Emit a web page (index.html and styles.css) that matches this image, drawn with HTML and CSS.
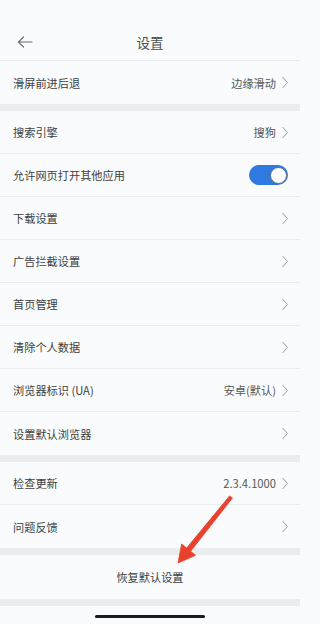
FILE: index.html
```html
<!DOCTYPE html>
<html lang="zh">
<head>
<meta charset="utf-8">
<link rel="stylesheet" href="styles.css">
</head>
<body>
<div class="page">
  <header class="header">
    <svg class="back" width="16" height="12" viewBox="0 0 16 12"><path d="M15 6H1.5M6.5 1L1.5 6l5 5" fill="none" stroke="#6b6f72" stroke-width="1.2" stroke-linecap="round" stroke-linejoin="round"/></svg>
    <div class="title">设置</div>
  </header>

  <div class="group">
    <div class="row"><span class="label">滑屏前进后退</span><span class="value">边缘滑动</span><svg class="chev" width="8" height="13" viewBox="0 0 8 13"><path d="M1.5 1l5 5.5-5 5.5" fill="none" stroke="#9a9ea1" stroke-width="1"/></svg></div>
  </div>
  <div class="gap"></div>
  <div class="group">
    <div class="row"><span class="label">搜索引擎</span><span class="value">搜狗</span><svg class="chev" width="8" height="13" viewBox="0 0 8 13"><path d="M1.5 1l5 5.5-5 5.5" fill="none" stroke="#9a9ea1" stroke-width="1"/></svg></div>
    <div class="row"><span class="label">允许网页打开其他应用</span><span class="toggle"><span class="knob"></span></span></div>
    <div class="row"><span class="label">下载设置</span><svg class="chev" width="8" height="13" viewBox="0 0 8 13"><path d="M1.5 1l5 5.5-5 5.5" fill="none" stroke="#9a9ea1" stroke-width="1"/></svg></div>
    <div class="row"><span class="label">广告拦截设置</span><svg class="chev" width="8" height="13" viewBox="0 0 8 13"><path d="M1.5 1l5 5.5-5 5.5" fill="none" stroke="#9a9ea1" stroke-width="1"/></svg></div>
    <div class="row"><span class="label">首页管理</span><svg class="chev" width="8" height="13" viewBox="0 0 8 13"><path d="M1.5 1l5 5.5-5 5.5" fill="none" stroke="#9a9ea1" stroke-width="1"/></svg></div>
    <div class="row"><span class="label">清除个人数据</span><svg class="chev" width="8" height="13" viewBox="0 0 8 13"><path d="M1.5 1l5 5.5-5 5.5" fill="none" stroke="#9a9ea1" stroke-width="1"/></svg></div>
    <div class="row"><span class="label">浏览器标识 (UA)</span><span class="value">安卓(默认)</span><svg class="chev" width="8" height="13" viewBox="0 0 8 13"><path d="M1.5 1l5 5.5-5 5.5" fill="none" stroke="#9a9ea1" stroke-width="1"/></svg></div>
    <div class="row last"><span class="label">设置默认浏览器</span><svg class="chev" width="8" height="13" viewBox="0 0 8 13"><path d="M1.5 1l5 5.5-5 5.5" fill="none" stroke="#9a9ea1" stroke-width="1"/></svg></div>
  </div>
  <div class="gap"></div>
  <div class="group">
    <div class="row"><span class="label">检查更新</span><span class="value">2.3.4.1000</span><svg class="chev" width="8" height="13" viewBox="0 0 8 13"><path d="M1.5 1l5 5.5-5 5.5" fill="none" stroke="#9a9ea1" stroke-width="1"/></svg></div>
    <div class="row last"><span class="label">问题反馈</span><svg class="chev" width="8" height="13" viewBox="0 0 8 13"><path d="M1.5 1l5 5.5-5 5.5" fill="none" stroke="#9a9ea1" stroke-width="1"/></svg></div>
  </div>
  <div class="gap"></div>
  <div class="reset">恢复默认设置</div>
  <div class="gap"></div>
  <div class="bottom"><span class="home"></span></div>

  <svg class="pointer" width="300" height="624" viewBox="0 0 300 624">
    <path d="M229.6 495.9 L232.4 498.1 L190.6 551.3 L195.6 555.3 L178 563 L181.6 544.1 L186.6 548.1 Z" fill="#e8412c" stroke="#e8412c" stroke-width="0.8" stroke-linejoin="round"/>
  </svg>
</div>
</body>
</html>
```

FILE: styles.css
```css
* { box-sizing: border-box; margin: 0; padding: 0; }
html { background: #f9fbfc; }
html, body { height: 624px; overflow: hidden; }
body {
  width: 300px;
  background: #f9fbfc;
  font-family: "Noto Sans CJK SC", "Noto Sans", "Liberation Sans", sans-serif;
  color: #3a3d40;
}
.page { position: relative; width: 300px; height: 624px; }
.header {
  height: 61px;
  padding-top: 24px;
  border-bottom: 1px solid #e6e9ea;
  display: flex;
  align-items: center;
  position: relative;
}
.back { margin-left: 17px; }
.title {
  position: absolute;
  left: 0; right: 0;
  top: 24px; bottom: 0;
  display: flex; align-items: center; justify-content: center;
  font-size: 13.5px;
  color: #4a4d50;
  pointer-events: none;
}
.group { background: #f9fbfc; }
.row {
  height: 43px;
  display: flex;
  align-items: center;
  padding: 0 11px 0 13px;
  border-bottom: 1px solid #eaeded;
  font-size: 11.2px;
}
.row.last, .group:first-of-type .row { border-bottom: none; }
.label { flex: 1; color: #3c3f42; }
.value { color: #53575a; margin-right: 5px; }
.chev { display: block; }
.toggle {
  width: 39px; height: 20px;
  border-radius: 10px;
  background: #2f7ae0;
  position: relative;
  margin-right: 1px;
}
.knob {
  position: absolute;
  right: 1.5px; top: 1.5px;
  width: 17px; height: 17px;
  border-radius: 50%;
  background: #fff;
  border: 1px solid #5d6d7d;
}
.gap { height: 7px; background: #eaeded; }
.reset {
  height: 44px;
  display: flex; align-items: center; justify-content: center;
  font-size: 11.2px;
  color: #3c3f42;
}
.bottom {
  height: 17px;
  display: flex; justify-content: center;
  padding-top: 9px;
}
.home { width: 110px; height: 3px; border-radius: 2px; background: #1c1c1c; }
.pointer { position: absolute; left: 0; top: 0; pointer-events: none; }
```
